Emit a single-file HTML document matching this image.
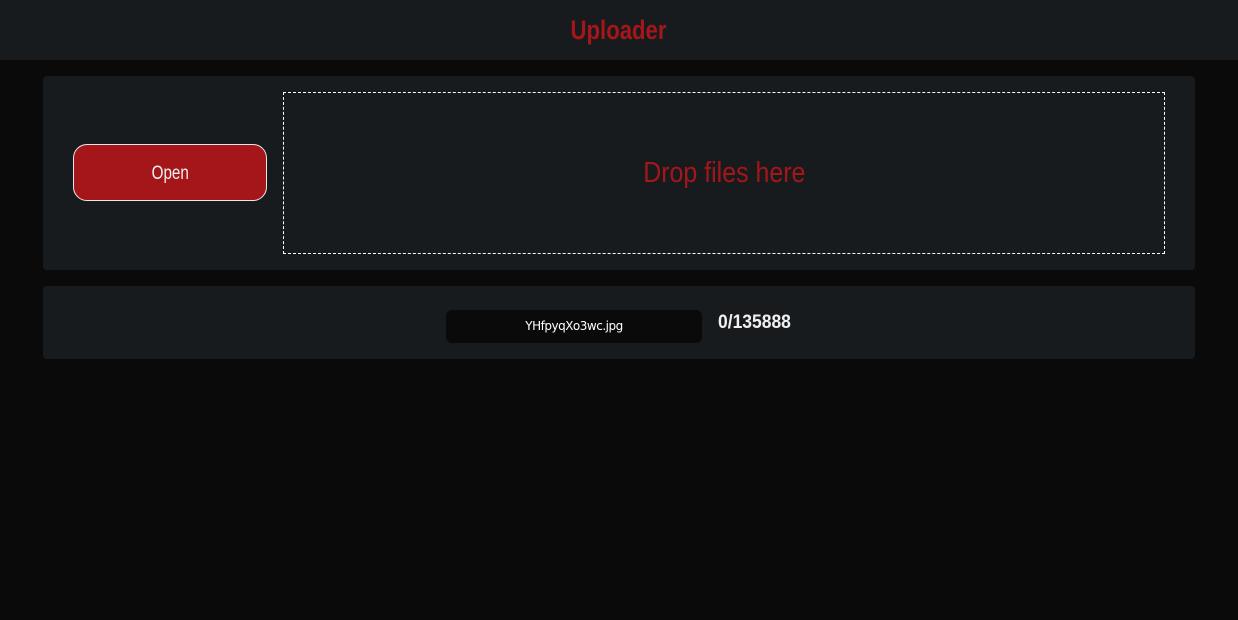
<!DOCTYPE html>
<html><head><style>
*{margin:0;padding:0;box-sizing:border-box}
body{width:1238px;height:620px;background:#0b0a0b;font-family:"Liberation Sans",sans-serif;position:relative;overflow:hidden}
.s{display:inline-block;transform-origin:center}
.hdr{position:absolute;left:0;top:0;width:1238px;height:60px;background:#181b1e;text-align:center;line-height:60px;color:#a4161a;font-size:27px;font-weight:bold}
.hdr .s{transform:scaleX(0.82)}
.p1{position:absolute;left:43px;top:76px;width:1152px;height:194px;background:#181b1e;border-radius:4px}
.btn{position:absolute;left:73px;top:144px;width:194px;height:57px;background:#a4161a;border:1px solid #e8e8e8;border-radius:14px;color:#f0f0f0;font-size:19px;text-align:center;line-height:57px}
.btn .s{transform:scaleX(0.8)}
.drop{position:absolute;left:283px;top:92px;width:882px;height:162px;border:1px dashed #fff;color:#a4161a;font-size:29px;text-align:center;line-height:160px}
.drop .s{transform:scaleX(0.86)}
.p2{position:absolute;left:43px;top:286px;width:1152px;height:73px;background:#181b1e;border-radius:4px}
.fn{position:absolute;left:446px;top:310px;width:256px;height:33px;background:#0b0a0b;border-radius:6px;color:#fff;font-family:"DejaVu Sans","Liberation Sans",sans-serif;font-size:12px;letter-spacing:-0.5px;text-align:center;line-height:33px}
.cnt{position:absolute;left:718px;top:311px;color:#f0f0f0;font-size:19px;font-weight:bold;line-height:24px}
.cnt .s{transform:scaleX(0.92);transform-origin:left}
</style></head><body>
<div class="hdr"><span class="s">Uploader</span></div>
<div class="p1"></div>
<div class="btn"><span class="s">Open</span></div>
<div class="drop"><span class="s">Drop files here</span></div>
<div class="p2"></div>
<div class="fn">YHfpyqXo3wc.jpg</div>
<div class="cnt"><span class="s">0/135888</span></div>
</body></html>
